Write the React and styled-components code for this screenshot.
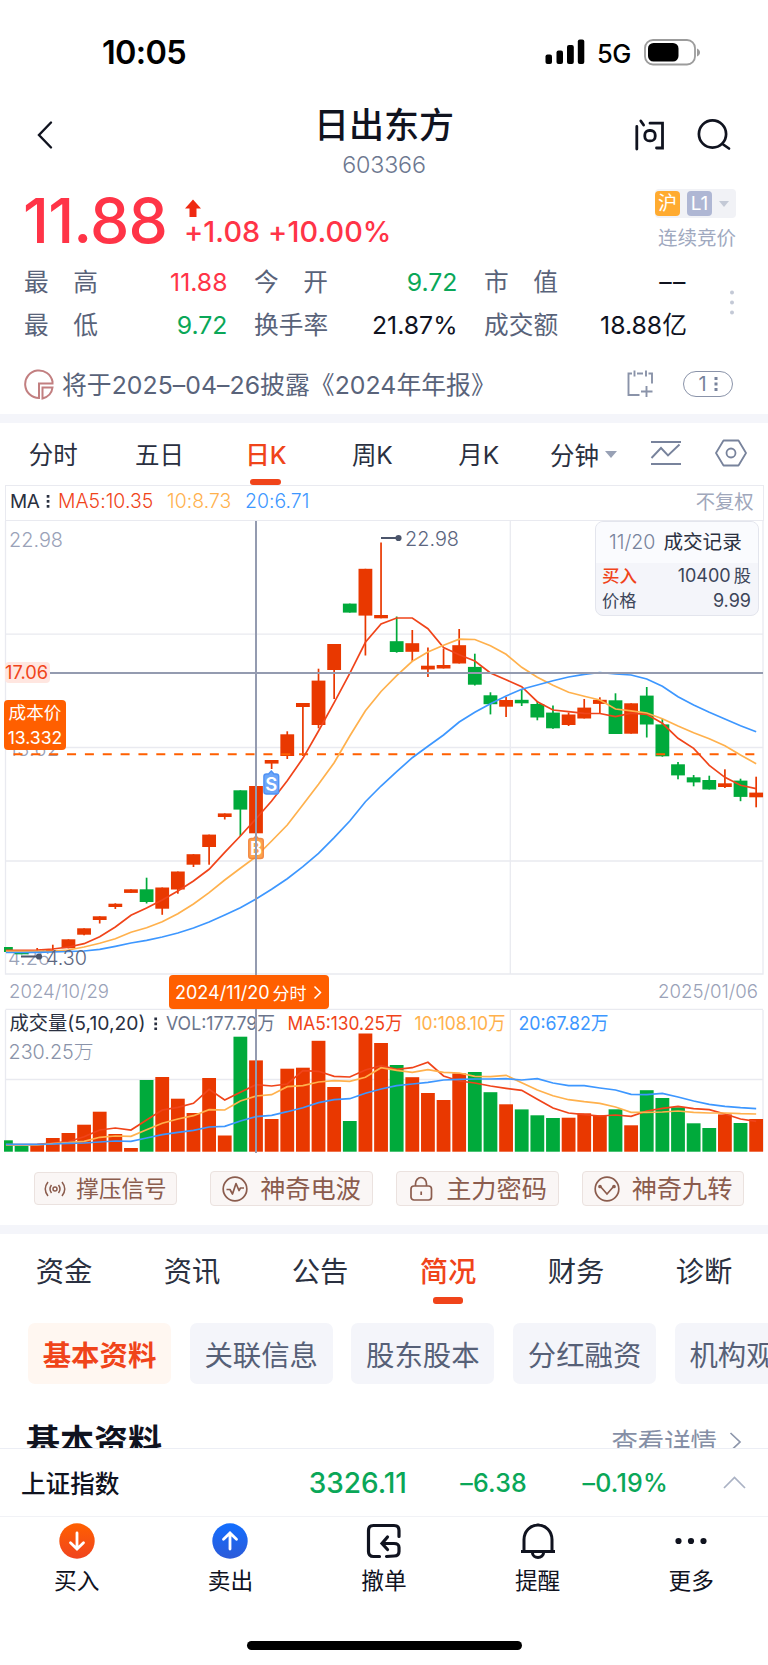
/**
 *
 * Stock detail page: quote, daily K chart, volume and company profile
 *
 */

import React from 'react';
import styled, { createGlobalStyle } from 'styled-components';

const UP = '#e93800';
const DOWN = '#00aa3b';
const ACCENT = '#f0441a';
const MA_COLORS = ['#f0441a', '#ffb14d', '#3d97ff'];

const STATS = [
	{ label: ['最', '高'], value: '11.88', color: '#ff3447' },
	{ label: ['今', '开'], value: '9.72', color: '#0aa758' },
	{ label: ['市', '值'], value: '––', color: '#10131f', spacing: 1.5 },
	{ label: ['最', '低'], value: '9.72', color: '#0aa758' },
	{ label: ['换手率'], value: '21.87%', color: '#10131f' },
	{ label: ['成交额'], value: '18.88亿', color: '#10131f' },
];

const PERIODS = ['分时', '五日', '日K', '周K', '月K'];
const SECTIONS = ['资金', '资讯', '公告', '简况', '财务', '诊断'];
const CHIPS = ['基本资料', '关联信息', '股东股本', '分红融资', '机构观点'];

// [up, body top, body bottom, high, low, volume top]
const CANDLES = [
	[0, 947, 952, 947, 952, 1140.3],
	[0, 952, 954.3, 952, 954.3, 1146],
	[1, 950.5, 952.5, 948, 952.5, 1145],
	[1, 950, 952, 944.7, 952, 1138],
	[1, 939.3, 948.3, 939.3, 948.3, 1133],
	[1, 928.3, 934.7, 928.3, 935.3, 1124.7],
	[1, 916.3, 920, 916.3, 923.5, 1111.7],
	[1, 903.7, 907, 903.3, 909, 1134],
	[1, 889.3, 892.9, 889.3, 892.9, 1148],
	[0, 889.3, 902, 877.7, 903.5, 1080],
	[1, 887.5, 908.7, 887.5, 914.8, 1077],
	[1, 871.5, 889.5, 871.5, 893.7, 1098.7],
	[1, 854.2, 864.7, 854.2, 867, 1113],
	[1, 834.6, 847, 834.6, 864.7, 1078],
	[1, 813.4, 817, 813.4, 819.5, 1135.5],
	[0, 790.3, 809.6, 790.3, 836, 1036.7],
	[1, 786, 833.3, 786, 833.3, 1060.4],
	[1, 760, 763.6, 760, 769, 1119],
	[1, 734.3, 756, 731.3, 759, 1068.7],
	[1, 703, 707, 703, 756, 1067.7],
	[1, 680.6, 725, 668.7, 728.3, 1040.8],
	[1, 644, 670, 644, 699, 1087],
	[0, 603.6, 612.6, 603.6, 612.6, 1121],
	[1, 568.8, 615.6, 568.8, 655.5, 1033.5],
	[1, 615, 618.3, 542.5, 618.3, 1043],
	[0, 641.2, 652, 616.5, 652.7, 1065],
	[1, 643.2, 651.8, 630, 661, 1077.2],
	[1, 665.7, 669.5, 647.5, 677, 1093],
	[1, 665, 668.5, 648.5, 668.5, 1100],
	[1, 645.2, 663.5, 629, 663.5, 1073.4],
	[0, 666.9, 684.7, 653.7, 685.5, 1072],
	[0, 695.3, 704.2, 692.3, 714.4, 1092.2],
	[1, 700, 706.7, 697, 717, 1104.3],
	[0, 699.8, 703.3, 689.3, 706, 1109.4],
	[0, 704, 717.5, 701, 720.3, 1115.3],
	[0, 712.6, 728.3, 705.5, 728.8, 1118],
	[1, 714.5, 725, 712.5, 726, 1117.7],
	[1, 707.6, 718.5, 699, 718.5, 1113.3],
	[1, 699.8, 703.9, 697.3, 713.4, 1115.3],
	[0, 700.3, 734, 693.3, 734, 1109.3],
	[1, 703.3, 733.7, 703.3, 733.7, 1125.3],
	[0, 695.6, 724.5, 687, 737.5, 1090.2],
	[0, 724.4, 756.3, 719, 756.7, 1098],
	[0, 764.3, 775.4, 762, 779.3, 1107.3],
	[0, 777.3, 782.4, 775, 786.3, 1123.3],
	[0, 780, 789.5, 775.7, 789.5, 1128],
	[1, 783.3, 787, 769.3, 788, 1114.4],
	[0, 780.6, 796.9, 778.7, 801.2, 1123],
	[1, 792.6, 797.3, 776.7, 807.3, 1119],
];

const PRICE_MA = [
	[
		950.3, 950.3, 950, 949, 947, 943.7, 936.7, 927, 915.3, 908, 900, 891, 881,
		869.3, 852.3, 836, 818.7, 801, 780.7, 758.3, 731, 702.7, 673.3, 642.3, 624,
		618, 618, 628.7, 647.5, 654.7, 661, 673, 679.7, 686.7, 701.7, 710, 711.7,
		713.3, 713.5, 716.7, 713.2, 714.3, 723.3, 738.3, 748.3, 765.3, 777.3, 785.3,
		788.7,
	],
	[
		951.3, 951.3, 951.3, 951, 950, 947, 943.3, 938.7, 932.3, 927.7, 921.7,
		913.7, 904, 892.7, 880, 868.3, 856.7, 841, 825, 804.7, 784.3, 762.7, 736,
		710.7, 691.5, 675.7, 661.3, 652, 645.3, 639.2, 639.5, 645.7, 654.3, 667.3,
		677.3, 685.3, 692.3, 696.3, 700, 709, 710.8, 713, 718.7, 726, 732.7, 738.7,
		745.7, 755, 763.7,
	],
	[
		952.5, 952.5, 952.3, 952, 951.5, 951, 949.3, 946.3, 943, 940.3, 937, 933,
		928, 922, 915, 907.7, 899, 889.3, 878.7, 866.7, 853.3, 837.7, 821, 801.7,
		786, 771.7, 757.7, 746.3, 735, 722, 712.3, 703.7, 696, 689.3, 685, 680.7,
		677, 674.3, 672.5, 674, 675, 679, 686.3, 696.7, 705, 712.3, 719, 725.7,
		731.7,
	],
];

const VOLUME_MA = [
	[
		1144.7, 1144.7, 1144.3, 1143, 1141.7, 1136.7, 1130, 1128, 1130, 1120, 1110,
		1107.3, 1103.3, 1089.3, 1100, 1092.3, 1084.7, 1086, 1084, 1070.7, 1071.3,
		1076.3, 1077, 1070, 1065.7, 1069.3, 1067.7, 1062.3, 1076, 1081, 1083, 1086,
		1088.3, 1090.3, 1099.3, 1108, 1113, 1114.7, 1116, 1115, 1116.3, 1111,
		1108.3, 1106.3, 1108.7, 1109.7, 1114, 1119, 1121.3,
	],
	[
		1145, 1145, 1145, 1143.7, 1142.7, 1141.3, 1137.3, 1136, 1136.3, 1129.7,
		1123.3, 1119, 1115.7, 1109.7, 1110, 1101, 1096, 1094.7, 1086.7, 1085.7,
		1082, 1080.7, 1081.3, 1077.3, 1067.7, 1070.3, 1072.3, 1069.7, 1072.3, 1073,
		1076.3, 1076.7, 1075.3, 1082.7, 1090, 1095.7, 1099.7, 1101.7, 1103.3, 1107,
		1112.3, 1112.3, 1112, 1111, 1112.3, 1113, 1113, 1113.7, 1114,
	],
	[
		1144.3, 1144.3, 1144.3, 1144, 1143.3, 1143, 1142, 1141, 1141.3, 1138,
		1134.7, 1132.3, 1130.3, 1127, 1126.3, 1121, 1116.7, 1115.3, 1111.7, 1107.7,
		1102.7, 1099.7, 1098.7, 1093.3, 1089, 1085.7, 1084, 1082.3, 1080, 1079.3,
		1079, 1079, 1078.7, 1080, 1078.7, 1083, 1085.7, 1085.7, 1088, 1090, 1094.3,
		1094.7, 1093.3, 1097, 1101, 1104.3, 1106.3, 1107.7, 1108.7,
	],
];

const cx = (i) => 256 + (i - 16) * 15.63;
const toPoints = (values) => values.map((y, i) => `${cx(i)},${y}`).join(' ');
const barX = (i) => Math.max(4, cx(i) - 6.9);
const barW = (i) => cx(i) + 6.9 - barX(i);

function PriceChart() {
	return (
		<Plot width="768" height="489" viewBox="0 521 768 489">
			<g stroke="#e9eaf0" strokeWidth="1.3">
				<path d="M5.5 521V974H763V521M5.5 634.2H763M5.5 747.5H763M5.5 861H763M510.3 521V974" fill="none" />
				<path d="M5.5 1009.5H763" />
			</g>
			<g fontSize="19.8" fontWeight="300" fill="#9aa2b8">
				<text x="9" y="546.5" textLength="54" lengthAdjust="spacingAndGlyphs">22.98</text>
				<text x="9" y="755.5" textLength="50">13.62</text>
				<text x="8" y="964.5" textLength="42">4.26</text>
				<text x="9" y="997.5" fontSize="18.8" textLength="100" lengthAdjust="spacingAndGlyphs">2024/10/29</text>
				<text x="658" y="997.5" fontSize="18.8" textLength="100" lengthAdjust="spacingAndGlyphs">2025/01/06</text>
			</g>
			{CANDLES.map(([up, top, bottom, high, low], i) => (
				<g key={i} fill={up ? UP : DOWN}>
					<rect x={cx(i) - 0.85} y={high} width="1.7" height={low - high} />
					<rect x={barX(i)} y={top} width={barW(i)} height={bottom - top} />
				</g>
			))}
			<path d="M13.5 754.2H763" stroke="#ff5f00" strokeWidth="2" strokeDasharray="9 8.85" />
			{PRICE_MA.map((values, i) => (
				<polyline key={i} points={toPoints(values)} fill="none" stroke={MA_COLORS[i]} strokeWidth="1.7" />
			))}
			<g fill="#4b556b" stroke="#4b556b" strokeWidth="1.8">
				<path d="M381 538H398M21 956.5H39" />
				<circle cx="398.5" cy="538" r="2.2" />
				<circle cx="39" cy="956.5" r="2.2" />
			</g>
			<g fontSize="19.8" fill="#5c6680" fontWeight="300">
				<text x="405" y="545.5" textLength="54" lengthAdjust="spacingAndGlyphs">22.98</text>
				<text x="46" y="964.5" textLength="41" lengthAdjust="spacingAndGlyphs">4.30</text>
			</g>
			<g fontSize="18.5" fontWeight="600" textAnchor="middle" fill="#fff" strokeWidth="1.4">
				<path d="M256 836L258.5 838.5H260.5Q263.3 838.5 263.3 841V856Q263.3 858.5 260.5 858.5H251.5Q248.7 858.5 248.7 856V841Q248.7 838.5 251.5 838.5H253.5Z" fill="#ff9838" stroke="#f17f35" opacity="0.9" />
				<text x="256" y="855.3">B</text>
				<path d="M271.3 771L274 774H276Q278.7 774 278.7 776.5V791.5Q278.7 794 276 794H266.5Q263.9 794 263.9 791.5V776.5Q263.9 774 266.5 774H268.5Z" fill="#6da6f8" stroke="#4f92f5" />
				<text x="271.3" y="790.5">S</text>
			</g>
		</Plot>
	);
}

function VolumeChart() {
	return (
		<Plot width="768" height="143" viewBox="0 1010 768 143">
			<path d="M5.5 1010V1151.5M763 1010V1151.5M510.3 1010V1151.5M5.5 1079.5H763" stroke="#e9eaf0" strokeWidth="1.3" />
			<text x="8.5" y="1059" fontSize="19.8" fontWeight="300" fill="#8a93a9" textLength="85" lengthAdjust="spacingAndGlyphs">
				230.25万
			</text>
			{CANDLES.map(([up, , , , , top], i) => (
				<rect key={i} x={barX(i)} y={top} width={barW(i)} height={1151.7 - top} fill={up ? UP : DOWN} />
			))}
			{VOLUME_MA.map((values, i) => (
				<polyline key={i} points={toPoints(values)} fill="none" stroke={MA_COLORS[i]} strokeWidth="1.7" />
			))}
			<g fontSize="19.2">
				<text x="9.5" y="1030" fill="#2a3040" textLength="136" lengthAdjust="spacingAndGlyphs">成交量(5,10,20)</text>
				<text x="166" y="1030" fill="#6b758c" textLength="109" lengthAdjust="spacingAndGlyphs">VOL:177.79万</text>
				<text x="287.5" y="1030" fill={MA_COLORS[0]} textLength="115" lengthAdjust="spacingAndGlyphs">MA5:130.25万</text>
				<text x="414.5" y="1030" fill={MA_COLORS[1]} textLength="91" lengthAdjust="spacingAndGlyphs">10:108.10万</text>
				<text x="518.5" y="1030" fill={MA_COLORS[2]} textLength="90" lengthAdjust="spacingAndGlyphs">20:67.82万</text>
			</g>
			<path d="M155.7 1017.5V1030" stroke="#2a3040" strokeWidth="2.7" strokeDasharray="2.7 2.3" />
		</Plot>
	);
}

function StatusBar() {
	return (
		<StatusWrapper>
			<Clock>10:05</Clock>
			<StatusIcons>
				<svg width="40" height="26" viewBox="0 0 40 26">
					<rect x="0.5" y="15.5" width="6.5" height="9.5" rx="2" />
					<rect x="11.5" y="11.5" width="6.5" height="13.5" rx="2" />
					<rect x="22" y="6" width="6.8" height="19" rx="2" />
					<rect x="32.8" y="0.5" width="6.5" height="24.5" rx="2" />
				</svg>
				<Network>5G</Network>
				<svg width="57" height="27" viewBox="0 0 57 27">
					<rect x="1" y="1" width="50" height="24.5" rx="8" fill="none" stroke="#9c9c9c" strokeWidth="1.8" />
					<rect x="4" y="4" width="30.5" height="18.5" rx="5.5" />
					<path d="M53 9.500C57 11 57 16 53 17.5Z" fill="#9c9c9c" />
				</svg>
			</StatusIcons>
		</StatusWrapper>
	);
}

function Header() {
	return (
		<HeaderWrapper>
			<svg width="18" height="30" viewBox="0 0 18 30" fill="none" stroke="#10131f" strokeWidth="2.4" strokeLinecap="round">
				<path d="M15 2.5L3 15L15 27.5" />
			</svg>
			<Title>
				<StockName>日出东方</StockName>
				<StockCode>603366</StockCode>
			</Title>
			<HeaderActions>
				<svg width="30" height="32" viewBox="0 0 30 32" fill="none" stroke="#10131f" strokeWidth="2.8" strokeLinecap="round">
					<path d="M1.8 7.5V30M5.8 2L8.6 6M15 4.2H27.5V29H21.5" />
					<rect x="9.8" y="11.5" width="10.4" height="10.4" rx="4.5" />
				</svg>
				<svg width="34" height="32" viewBox="0 0 34 32" fill="none" stroke="#10131f" strokeWidth="2.7" strokeLinecap="round">
					<circle cx="15.5" cy="15" r="13.6" />
					<path d="M25.5 25L32 29.5" />
				</svg>
			</HeaderActions>
		</HeaderWrapper>
	);
}

function Quote() {
	return (
		<QuoteWrapper>
			<Price>11.88</Price>
			<Change>
				<svg width="16" height="19" viewBox="0 0 16 19">
					<path d="M8 0.5L16 9.5H11.5V18H4.5V9.5H0Z" fill="#ef2a12" />
				</svg>
				<ChangeText>+1.08 +10.00%</ChangeText>
			</Change>
			<Market>
				<Badges>
					<Badge $bg="#ffab30">沪</Badge>
					<Badge $bg="#afb7d4">L1</Badge>
					<Caret $size={5} $color="#c3c9d6" />
				</Badges>
				<MarketState>连续竞价</MarketState>
			</Market>
		</QuoteWrapper>
	);
}

function App() {
	return (
		<Page>
			<GlobalStyle />
			<StatusBar />
			<Header />
			<Quote />
			<StatsRow>
				<StatsGrid>
					{STATS.map(({ label, value, color, spacing }) => (
						<Stat key={label.join('')}>
							<StatLabel>
								{label.map((part) => (
									<span key={part}>{part}</span>
								))}
							</StatLabel>
							<StatValue $color={color} $spacing={spacing || 0}>
								{value}
							</StatValue>
						</Stat>
					))}
				</StatsGrid>
				<svg width="6" height="32" viewBox="0 0 6 32" fill="#c3c9d6">
					<circle cx="3" cy="3.5" r="2" />
					<circle cx="3" cy="13.5" r="2" />
					<circle cx="3" cy="23.5" r="2" />
				</svg>
			</StatsRow>
			<Notice>
				<svg width="30" height="31" viewBox="0 0 30 31" fill="none" stroke="#c27f80" strokeWidth="2">
					<path d="M15 29A13.8 13.8 0 1 1 28.5 12.5V14.5H15Z" />
					<path d="M18.5 18.5H28.5Q27.5 27 18.5 29.5Z" />
				</svg>
				<NoticeText>将于2025–04–26披露《2024年年报》</NoticeText>
				<svg width="28" height="28" viewBox="0 0 28 28" fill="none" stroke="#8a93a9" strokeWidth="1.9">
					<path d="M5 3.5H1.5V25H12.5M10 3.5H16M21.5 3.5H25V13.5M7.5 0.5V6.5M19 0.5V6.5M19.5 16V27M14 21.5H25.5" />
				</svg>
				<Pill>
					1
					<svg width="4" height="16" viewBox="0 0 4 16" fill="#78839c">
						<rect x="0.5" y="1" width="3" height="3" />
						<rect x="0.5" y="6.5" width="3" height="3" />
						<rect x="0.5" y="12" width="3" height="3" />
					</svg>
				</Pill>
			</Notice>
			<Divider />

			<PeriodBar>
				{PERIODS.map((name) => (
					<Period key={name} $active={name === '日K'}>
						{name}
					</Period>
				))}
				<Minutes>
					分钟
					<Caret $size={6} $color="#98a1b5" />
				</Minutes>
				<svg width="32" height="26" viewBox="0 0 32 26" fill="none" stroke="#78839c" strokeWidth="1.9">
					<path d="M1 2H31M1 24H31M1.5 18L11 8L18 15.5L29.5 4.5" />
				</svg>
				<svg width="32" height="28" viewBox="0 0 32 28" fill="none" stroke="#78839c" strokeWidth="1.8">
					<path d="M8.5 1.5H23.5L31 14L23.5 26.5H8.5L1 14Z" strokeLinejoin="round" />
					<circle cx="16" cy="14" r="4.5" />
				</svg>
			</PeriodBar>

			<Charts>
				<MaRow>
					<MaName>MA</MaName>
					<svg width="4" height="15" viewBox="0 0 4 15" fill="#2a3040">
						<rect x="0.7" y="1" width="2.7" height="2.7" />
						<rect x="0.7" y="6" width="2.7" height="2.7" />
						<rect x="0.7" y="11" width="2.7" height="2.7" />
					</svg>
					<MaValue $color={MA_COLORS[0]} $width={95}>MA5:10.35</MaValue>
					<MaValue $color={MA_COLORS[1]} $width={64}>10:8.73</MaValue>
					<MaValue $color={MA_COLORS[2]} $width={64}>20:6.71</MaValue>
					<Adjust>不复权</Adjust>
				</MaRow>
				<PriceChart />
				<VolumeChart />
				<CrossV />
				<CrossH />
				<CrossPrice>17.06</CrossPrice>
				<CostTag>
					<span>成本价</span>
					<span>13.332</span>
				</CostTag>
				<DateTag>
					2024/11/20<small>分时</small>
					<svg width="9" height="15" viewBox="0 0 9 15" fill="none" stroke="#fff" strokeWidth="1.5">
						<path d="M1.5 1.5L7.5 7.5L1.5 13.5" />
					</svg>
				</DateTag>
				<TradeCard>
					<TradeHead>
						<span>11/20</span>成交记录
					</TradeHead>
					<TradeRow>
						<Buy>买入</Buy>
						<span>
							10400 <small>股</small>
						</span>
					</TradeRow>
					<TradeRow>
						<small>价格</small>
						<span>9.99</span>
					</TradeRow>
				</TradeCard>
			</Charts>

			<Signals>
				<Signal $width={143} $small>
					<svg width="22" height="18" viewBox="0 0 22 18" fill="none" stroke="#8b5c4d" strokeWidth="1.5">
						<circle cx="11" cy="9" r="2" />
						<path d="M7.5 5Q4.5 9 7.5 13M14.5 5Q17.5 9 14.5 13M4 2Q-1.5 9 4 16M18 2Q23.5 9 18 16" />
					</svg>
					撑压信号
				</Signal>
				<Signal $width={163}>
					<svg width="26" height="26" viewBox="0 0 26 26" fill="none" stroke="#8b5c4d" strokeWidth="1.7">
						<circle cx="13" cy="13" r="11.8" />
						<path d="M4.5 13.5H8L10.5 18L14 7.5L17 14.5L18.5 12H22" strokeLinejoin="round" />
					</svg>
					神奇电波
				</Signal>
				<Signal $width={163}>
					<svg width="26" height="26" viewBox="0 0 26 26" fill="none" stroke="#8b5c4d" strokeWidth="1.7">
						<rect x="3" y="10" width="20.5" height="14" rx="3" />
						<path d="M7.5 10V8A5.500 6.5 0 0 1 18.5 8V10M13.2 15.5V19" />
					</svg>
					主力密码
				</Signal>
				<Signal $width={162}>
					<svg width="26" height="26" viewBox="0 0 26 26" fill="none" stroke="#8b5c4d" strokeWidth="1.7">
						<circle cx="13" cy="13" r="11.8" />
						<path d="M6 10L13 18L20 10" />
						<circle cx="6" cy="10.5" r="1" />
						<circle cx="20" cy="10.5" r="1" />
					</svg>
					神奇九转
				</Signal>
			</Signals>
			<Divider />

			<SectionBar>
				{SECTIONS.map((name) => (
					<Section key={name} $active={name === '简况'}>
						{name}
					</Section>
				))}
			</SectionBar>
			<ChipRow>
				{CHIPS.map((name, i) => (
					<Chip key={name} $active={i === 0}>
						{name}
					</Chip>
				))}
			</ChipRow>
			<ProfileHead>
				<h2>基本资料</h2>
				<More>
					查看详情
					<svg width="13" height="22" viewBox="0 0 13 22" fill="none" stroke="#8d96ab" strokeWidth="1.7">
						<path d="M1.5 2L11 11L1.5 20" />
					</svg>
				</More>
			</ProfileHead>

			<IndexBar>
				<IndexName>上证指数</IndexName>
				<IndexValue $width={147} $size={28}>3326.11</IndexValue>
				<IndexValue $width={120} $size={25}>–6.38</IndexValue>
				<IndexValue $width={141} $size={25}>–0.19%</IndexValue>
				<svg width="23" height="13" viewBox="0 0 23 13" fill="none" stroke="#aab2c4" strokeWidth="1.7">
					<path d="M1 12L11.5 1.5L22 12" />
				</svg>
			</IndexBar>
			<TabBar>
				<Tab>
					<svg width="36" height="36" viewBox="0 0 36 36">
						<defs>
							<linearGradient id="buy" x1="0" y1="0" x2="0" y2="1">
								<stop offset="0" stopColor="#ff6000" />
								<stop offset="1" stopColor="#f0441f" />
							</linearGradient>
						</defs>
						<circle cx="18" cy="18" r="17.7" fill="url(#buy)" />
						<path d="M18 10V26M11.5 19.8L18 26L24.5 19.8" fill="none" stroke="#fff" strokeWidth="2.8" strokeLinecap="round" />
					</svg>
					买入
				</Tab>
				<Tab>
					<svg width="36" height="36" viewBox="0 0 36 36">
						<defs>
							<linearGradient id="sell" x1="0" y1="0" x2="0" y2="1">
								<stop offset="0" stopColor="#126eff" />
								<stop offset="1" stopColor="#2d5bd8" />
							</linearGradient>
						</defs>
						<circle cx="18" cy="18" r="17.7" fill="url(#sell)" />
						<path d="M18 26V10M11.5 16.2L18 10L24.5 16.2" fill="none" stroke="#fff" strokeWidth="2.8" strokeLinecap="round" />
					</svg>
					卖出
				</Tab>
				<Tab>
					<svg width="36" height="36" viewBox="0 0 36 36" fill="none" stroke="#10131f" strokeWidth="3.2" strokeLinecap="round">
						<path d="M13.5 33.5H7.5Q2.5 33.5 2.5 28.5V7.5Q2.5 2.5 7.5 2.5H28Q33 2.5 33 7.5V13.5" />
						<path d="M20.5 33.5L28 33Q33 33 33 28.5V24.5Q33 20.5 28 20.5H16.5M21.5 14L16 20.5L21.5 26.5" />
					</svg>
					撤单
				</Tab>
				<Tab>
					<svg width="36" height="36" viewBox="0 0 36 36" fill="none" stroke="#10131f" strokeWidth="3">
						<path d="M4 28V16.5A14 14.5 0 0 1 32 16.5V28M1 28.5H35M18 0.5V3M12.5 30A5.500 4.5 0 0 0 23.5 30" />
					</svg>
					提醒
				</Tab>
				<Tab>
					<svg width="36" height="36" viewBox="0 0 36 36" fill="#10131f">
						<circle cx="5.5" cy="18" r="3.1" />
						<circle cx="18" cy="18" r="3.1" />
						<circle cx="30.5" cy="18" r="3.1" />
					</svg>
					更多
				</Tab>
			</TabBar>
			<HomeIndicator />
		</Page>
	);
}

export default App;

const GlobalStyle = createGlobalStyle`
	* {
		box-sizing: border-box;
	}
	body {
		margin: 0;
		background: #fff;
		font-family: Inter, 'Noto Sans CJK SC', sans-serif;
		color: #2a3040;
	}
`;

const Page = styled.div`
	width: 768px;
	height: 1665px;
	overflow: hidden;
	white-space: nowrap;
	background: #fff;
	svg {
		flex: none;
	}
`;

const StatusWrapper = styled.div`
	height: 100px;
	display: flex;
	justify-content: space-between;
	align-items: center;
	padding: 4px 67px 0 102px;
`;

const Clock = styled.div`
	padding-top: 2px;
	font-size: 32.5px;
	font-weight: 600;
	line-height: 40px;
	letter-spacing: -0.7px;
	color: #000;
`;

const StatusIcons = styled.div`
	display: flex;
	align-items: center;
`;

const Network = styled.div`
	width: 34px;
	margin: 2px 13px 0 12px;
	font-size: 25.5px;
	font-weight: 500;
	letter-spacing: -0.5px;
	color: #000;
`;

const HeaderWrapper = styled.div`
	height: 86px;
	display: flex;
	justify-content: space-between;
	align-items: flex-start;
	padding: 0 37px 0 36px;
	> svg {
		margin-top: 20px;
		margin-right: 79px;
	}
`;

const Title = styled.div`
	text-align: center;
`;

const StockName = styled.div`
	height: 50px;
	line-height: 50px;
	font-size: 35px;
	font-weight: 500;
	color: #10131f;
`;

const StockCode = styled.div`
	line-height: 29px;
	font-size: 23.3px;
	font-weight: 300;
	letter-spacing: -0.2px;
	color: #6d7890;
`;

const HeaderActions = styled.div`
	display: flex;
	gap: 32px;
	padding-top: 19px;
`;

const QuoteWrapper = styled.div`
	height: 76px;
	display: flex;
	padding: 0 32px 0 23px;
`;

const Price = styled.div`
	width: 161px;
	line-height: 68px;
	font-size: 62.5px;
	font-weight: 500;
	letter-spacing: -0.8px;
	color: #ff3447;
`;

const Change = styled.div`
	padding-top: 13px;
	svg {
		display: block;
		margin-left: 1px;
	}
`;

const ChangeText = styled.div`
	line-height: 27px;
	font-size: 28.8px;
	font-weight: 500;
	letter-spacing: 0.1px;
	color: #ff3447;
`;

const Market = styled.div`
	margin-left: auto;
	display: flex;
	flex-direction: column;
	align-items: flex-end;
`;

const Badges = styled.div`
	display: flex;
	align-items: center;
	gap: 7px;
	height: 29px;
	margin-top: 3px;
	padding-right: 7px;
	background: #f1f2f6;
	border-radius: 4px;
`;

const Badge = styled.div`
	width: 25px;
	height: 25px;
	line-height: 25px;
	border-radius: 4px;
	background: ${(props) => props.$bg};
	color: #fff;
	font-size: 19px;
	text-align: center;
`;

const Caret = styled.i`
	border: ${(props) => props.$size}px solid transparent;
	border-top: ${(props) => props.$size + 1}px solid ${(props) => props.$color};
	border-bottom: 0;
`;

const MarketState = styled.div`
	margin-top: 6px;
	line-height: 28px;
	font-size: 19.5px;
	color: #a0a9bf;
`;

const StatsRow = styled.div`
	display: flex;
	align-items: center;
	justify-content: space-between;
	height: 84px;
	padding: 1px 33px 0 24px;
`;

const StatsGrid = styled.div`
	display: grid;
	grid-template-columns: 203.5px 203.5px 203px;
	grid-auto-rows: 43px;
	column-gap: 26.5px;
`;

const Stat = styled.div`
	display: flex;
	justify-content: space-between;
	line-height: 41px;
	font-size: 24.7px;
`;

const StatLabel = styled.div`
	width: 74px;
	display: flex;
	justify-content: space-between;
	color: #59637a;
`;

const StatValue = styled.div`
	font-size: 24.8px;
	letter-spacing: ${(props) => props.$spacing}px;
	color: ${(props) => props.$color};
`;

const Notice = styled.div`
	height: 68px;
	display: flex;
	align-items: center;
	padding: 8px 35px 0 24px;
`;

const NoticeText = styled.div`
	flex: 1;
	padding: 0 0 3px 8px;
	font-size: 24.8px;
	letter-spacing: 0.05px;
	color: #59637a;
`;

const Pill = styled.div`
	width: 50px;
	height: 26px;
	margin-left: 28px;
	display: flex;
	align-items: center;
	justify-content: center;
	gap: 7px;
	border: 1.8px solid #8a93a9;
	border-radius: 13px;
	font-size: 20px;
	color: #78839c;
`;

const Divider = styled.div`
	height: 9px;
	background: #f4f5fa;
`;

const PeriodBar = styled.div`
	height: 62px;
	display: flex;
	align-items: center;
	font-size: 24.5px;
	> svg:first-of-type {
		margin: 0 33px 2px 34px;
	}
	> svg:last-of-type {
		margin-bottom: 2px;
	}
`;

const Period = styled.div`
	width: 106.4px;
	height: 62px;
	display: flex;
	flex-direction: column;
	align-items: center;
	line-height: 64px;
	font-weight: ${(props) => (props.$active ? 500 : 400)};
	color: ${(props) => (props.$active ? ACCENT : '#2a3040')};
	&::after {
		content: '';
		flex: none;
		display: ${(props) => (props.$active ? 'block' : 'none')};
		width: 31px;
		height: 6px;
		margin-top: -8px;
		border-radius: 3px;
		background: ${ACCENT};
	}
`;

const Minutes = styled.div`
	display: flex;
	align-items: center;
	gap: 6px;
	width: 66px;
	margin-left: 18px;
`;

const Charts = styled.div`
	position: relative;
	height: 668px;
`;

const MaRow = styled.div`
	display: flex;
	align-items: center;
	height: 36px;
	margin: 0 4.5px 0 5px;
	padding: 0 9px 4px 4px;
	border: 1.3px solid #e9eaf0;
`;

const MaName = styled.div`
	width: 36px;
	font-size: 19px;
	letter-spacing: -0.5px;
`;

const MaValue = styled.div`
	width: ${(props) => props.$width}px;
	margin-left: ${(props) => (props.$width > 90 ? 8 : 14)}px;
	font-size: 19.4px;
	font-weight: 300;
	letter-spacing: 0.05px;
	color: ${(props) => props.$color};
`;

const Adjust = styled.div`
	margin-left: auto;
	font-size: 19.3px;
	color: #a0a7bb;
`;

const Plot = styled.svg`
	display: block;
`;

// everything below lies over the plots
const CrossV = styled.div`
	position: absolute;
	left: 255px;
	top: 36px;
	width: 2px;
	height: 632px;
	background: #949bb0;
`;

const CrossH = styled.div`
	position: absolute;
	left: 50px;
	right: 5px;
	top: 187px;
	height: 2px;
	background: #949bb0;
`;

const CrossPrice = styled.div`
	position: absolute;
	left: 5px;
	top: 177px;
	width: 45px;
	line-height: 21px;
	border-radius: 4px;
	background: #ffe6e0;
	font-size: 18.3px;
	color: ${ACCENT};
`;

const CostTag = styled.div`
	position: absolute;
	left: 4px;
	top: 215px;
	width: 62px;
	height: 50px;
	display: flex;
	flex-direction: column;
	align-items: center;
	border-radius: 4px;
	background: #ff5f00;
	color: #fff;
	font-size: 17.6px;
	line-height: 25px;
`;

const DateTag = styled.div`
	position: absolute;
	left: 169px;
	top: 490px;
	width: 160px;
	height: 34px;
	display: flex;
	align-items: center;
	padding-left: 6px;
	border-radius: 4px;
	background: #ff5f00;
	color: #fff;
	font-size: 18px;
	small {
		margin: 0 6px 0 3px;
		font-size: 17px;
	}
`;

const TradeCard = styled.div`
	position: absolute;
	left: 595px;
	top: 36px;
	width: 164px;
	height: 95px;
	border: 1px solid #e3e5ed;
	border-radius: 8px;
	background: #f4f5fa;
	overflow: hidden;
	small {
		font-size: 17.3px;
	}
`;

const TradeHead = styled.div`
	height: 41px;
	padding-left: 13px;
	line-height: 40px;
	background: #fafbfe;
	font-size: 19.6px;
	span {
		margin-right: 8px;
		font-weight: 300;
		color: #78839c;
	}
`;

const TradeRow = styled.div`
	display: flex;
	justify-content: space-between;
	padding: 0 7px 0 6px;
	line-height: 25px;
	font-size: 18px;
	word-spacing: -2px;
	color: #3c4559;
`;

const Buy = styled.span`
	font-size: 17.5px;
	font-weight: 500;
	color: ${ACCENT};
`;

const Signals = styled.div`
	height: 72px;
	display: flex;
	align-items: flex-start;
	justify-content: space-between;
	padding: 18px 24px 0 34px;
`;

const Signal = styled.div`
	width: ${(props) => props.$width}px;
	height: ${(props) => (props.$small ? 33 : 35)}px;
	margin-top: ${(props) => (props.$small ? 1 : 0)}px;
	margin-right: ${(props) => (props.$small ? 10 : 0)}px;
	padding-top: 1px;
	display: flex;
	align-items: center;
	justify-content: center;
	gap: ${(props) => (props.$small ? 10 : 12)}px;
	border: 1px solid #ebe2df;
	border-radius: 4px;
	background: #faf6f5;
	color: #8b5c4d;
	font-size: ${(props) => (props.$small ? 22.6 : 25.2)}px;
	line-height: 30px;
`;

const SectionBar = styled.div`
	display: flex;
	height: 89px;
`;

const Section = styled.div`
	flex: 1;
	display: flex;
	flex-direction: column;
	align-items: center;
	line-height: 76px;
	font-size: 28.3px;
	font-weight: ${(props) => (props.$active ? 500 : 400)};
	color: ${(props) => (props.$active ? ACCENT : '#2a3040')};
	&::after {
		content: '';
		display: ${(props) => (props.$active ? 'block' : 'none')};
		width: 30px;
		height: 7px;
		margin-top: -13px;
		border-radius: 3px;
		background: ${ACCENT};
	}
`;

const ChipRow = styled.div`
	display: flex;
	gap: 18.7px;
	padding-left: 28px;
`;

const Chip = styled.div`
	flex: none;
	width: 143px;
	height: 61px;
	line-height: 66px;
	border-radius: 7px;
	text-align: center;
	font-size: 28.4px;
	font-weight: ${(props) => (props.$active ? 700 : 400)};
	color: ${(props) => (props.$active ? ACCENT : '#566077')};
	background: ${(props) => (props.$active ? '#fff7f1' : '#f4f5fa')};
`;

// cut off by the index bar
const ProfileHead = styled.div`
	height: 64px;
	overflow: hidden;
	display: flex;
	justify-content: space-between;
	align-items: flex-start;
	padding: 33px 26px 0 26px;
	h2 {
		margin: 0;
		font-size: 34px;
		line-height: 50px;
		font-weight: 700;
		color: #10131f;
	}
`;

const More = styled.div`
	display: flex;
	align-items: center;
	gap: 12px;
	line-height: 50px;
	font-size: 26.4px;
	color: #858fa6;
`;

const IndexBar = styled.div`
	display: flex;
	align-items: center;
	height: 69px;
	padding-left: 21px;
	border-top: 1.5px solid #eceef5;
	border-bottom: 1px solid #f1f2f6;
	svg {
		margin-left: 55px;
	}
`;

const IndexName = styled.div`
	width: 239px;
	padding-bottom: 2px;
	font-size: 24.6px;
	font-weight: 500;
	color: #10131f;
`;

const IndexValue = styled.div`
	width: ${(props) => props.$width}px;
	text-align: right;
	font-size: ${(props) => props.$size}px;
	font-weight: 500;
	letter-spacing: ${(props) => (props.$size > 26 ? 0 : 0.2)}px;
	color: #0aa758;
`;

const TabBar = styled.div`
	display: flex;
	height: 124px;
	padding-top: 6px;
`;

const Tab = styled.div`
	flex: 1;
	display: flex;
	flex-direction: column;
	align-items: center;
	gap: 5px;
	font-size: 22.7px;
	line-height: 34px;
	color: #10131f;
`;

const HomeIndicator = styled.div`
	width: 275px;
	height: 9px;
	margin: 0 auto;
	border-radius: 5px;
	background: #000;
`;
